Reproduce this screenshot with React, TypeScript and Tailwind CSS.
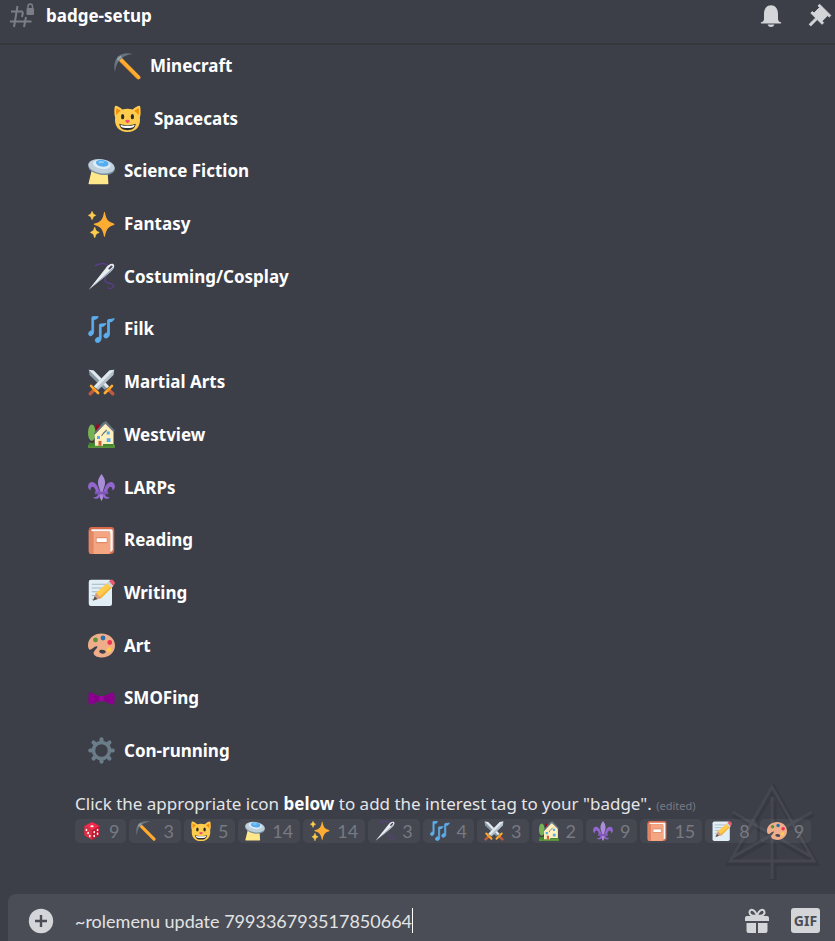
import { useState } from "react";
import type { ReactNode } from "react";

type EmojiName =
  | "die" | "pick" | "cat" | "saucer" | "sparkles" | "needle" | "notes" | "swords"
  | "house" | "fleur" | "book" | "memo" | "palette" | "bowtie" | "gear";

const art: Record<EmojiName, ReactNode> = {
  die: (
    <>
      <path fill="#f4294b" d="M18 2 L32 9 L18 17 L4 9Z" />
      <path fill="#dd2e44" d="M4 9 L18 17 V34 L6 27 Q4 26 4 24Z" />
      <path fill="#be1931" d="M32 9 L18 17 V34 L30 27 Q32 26 32 24Z" />
      <g fill="#fff">
        <ellipse cx="18" cy="9.500" rx="3" ry="1.800" />
        <ellipse cx="8" cy="16" rx="1.500" ry="2.200" />
        <ellipse cx="14" cy="27" rx="1.500" ry="2.200" />
        <ellipse cx="11" cy="21.500" rx="1.500" ry="2.200" />
        <ellipse cx="28" cy="16" rx="1.500" ry="2.200" />
        <ellipse cx="22" cy="20" rx="1.500" ry="2.200" />
        <ellipse cx="28" cy="23" rx="1.500" ry="2.200" />
        <ellipse cx="22" cy="27" rx="1.500" ry="2.200" />
      </g>
    </>
  ),
  pick: (
    <>
      <path d="M7 7 L32.500 32.500" stroke="#ffac33" strokeWidth="5.500" strokeLinecap="round" />
      <path d="M9 12 L31 34" stroke="#f4900c" strokeWidth="1.200" />
      <path fill="#66757f" d="M25.500 1.300 C16 -.8 9 1 5.200 5 C1 9.200 -.8 16 1.300 25.500 C2.500 17 4.500 12.500 8.500 8.500 C12.500 4.500 17 2.500 25.500 1.300Z" />
      <path d="M4.500 9.500 L9.500 4.500" stroke="#99aab5" strokeWidth="2.500" />
    </>
  ),
  cat: (
    <>
      <path fill="#ffcc4d" d="M2 1 C.8 1 .5 5 .5 10 C.5 13 1 15 1.500 16 C0 29 7 36 18 36 S36 29 34.500 16 C35 15 35.500 13 35.500 10 C35.500 5 35.200 1 34 1 C31.500 1 27.500 3.500 25 6 C20.500 4.500 15.500 4.500 11 6 C8.500 3.500 4.500 1 2 1Z" />
      <path fill="#f4900c" d="M3 4.500 C5 4.500 7.500 6.500 9 8 C6 9.500 4.500 11.500 3.200 13.500 C2.700 10 2.500 6.500 3 4.500Z M33 4.500 C31 4.500 28.500 6.500 27 8 C30 9.500 31.500 11.500 32.800 13.500 C33.300 10 33.500 6.500 33 4.500Z" />
      <ellipse cx="11.500" cy="15.500" rx="2.200" ry="3.600" fill="#292f33" />
      <ellipse cx="24.500" cy="15.500" rx="2.200" ry="3.600" fill="#292f33" />
      <path fill="#f0506e" d="M14.800 20.500 Q18 18.800 21.200 20.500 Q21.300 22.700 18 24.200 Q14.700 22.700 14.800 20.500Z" />
      <path fill="#292f33" d="M7 25 C11 27.500 25 27.500 29 25 C28 31.500 24 33.500 18 33.500 S8 31.500 7 25Z" />
      <path fill="#fff" d="M8.500 26.500 C13 28 23 28 27.500 26.500 C27 28.800 26 29.500 24.500 30 C20 31 16 31 11.500 30 C10 29.500 9 28.800 8.500 26.500Z" />
    </>
  ),
  saucer: (
    <>
      <path fill="#ffe88a" d="M5 16 L.8 33.500 Q0 35 2 35 H26 Q27.500 35 27.200 33.500 L26 17Z" />
      <ellipse cx="18" cy="13" rx="17.900" ry="9.500" fill="#7d909d" transform="rotate(9 18 13)" />
      <ellipse cx="18" cy="11" rx="17.800" ry="9.300" fill="#bdd0dc" transform="rotate(9 18 11)" />
      <ellipse cx="18.500" cy="8.500" rx="12" ry="6" fill="#dcebf5" transform="rotate(9 18 8)" />
      <ellipse cx="19" cy="7" rx="8.500" ry="4.500" fill="#55acee" transform="rotate(9 19 7)" />
      <ellipse cx="17.500" cy="5.500" rx="4" ry="1.400" fill="#8fccf8" />
    </>
  ),
  sparkles: (
    <>
      <path fill="#ffac33" d="M34.300 16.500 C27 14.500 24.500 12 22.600 2 Q22 0 21.300 2 C19.500 12 17 14.500 8.800 16.700 Q6.500 17.600 8.800 18.500 C17 20.700 19.500 24 21.300 33.500 Q22 35.500 22.600 33.500 C24.500 24 27 20.700 34.300 18.500 Q36.500 17.500 34.300 16.500Z" />
      <path fill="#ffcc4d" stroke="#ffcc4d" strokeWidth=".8" d="M14.300 28 C10.800 27 10.300 26 9.400 22.400 Q9 21 8.500 22.400 C7.600 26 7 27 3.800 28 Q3 28.500 3.800 29 C7 30 7.600 31.500 8.500 35 Q9 36.200 9.400 35 C10.300 31.500 10.800 30 14.300 29 Q15 28.500 14.300 28Z M9.800 5.200 C7.200 4.500 6.600 3.800 5.900 1 Q5.500 0 5 1 C4.200 3.800 3.700 4.500 1 5.200 Q0 5.700 1 6.200 C3.700 7 4.200 8 5 11 Q5.500 12 5.900 11 C6.600 8 7.200 7 9.800 6.200 Q10.800 5.700 9.800 5.200Z" />
    </>
  ),
  needle: (
    <>
      <path d="M9 4 C13 .8 20 0 25 2 C34 8 21 16 22.500 23 C24 29 31 25 34 30 C35 33 31 35 26 33" fill="none" stroke="#5f3d96" strokeWidth="1.600" />
      <path fill="#e8eef2" d="M1 35.500 L23.500 7 C26.500 2.500 31 .2 34 1.500 C36.500 4 34 8.500 30 12Z" />
      <path fill="#9aa9b5" d="M1 35.500 L30 12 C32 10 34 8 34.800 5 L27 12Z" />
      <path d="M28.500 7.500 L31.500 4.500" stroke="#454058" strokeWidth="2.500" strokeLinecap="round" />
    </>
  ),
  notes: (
    <g fill="#5dadec" stroke="#5dadec" strokeWidth="1.200" strokeLinejoin="round">
      <path d="M13.500 .8 C13 4.500 9.500 3.500 7.500 5.500 V21 C7.500 25 4.500 27 2.500 26.300 C.2 25.500 .3 21.500 2.800 20.200 C3.700 19.700 4.500 19.500 5.200 19.700 V2 Q5 1 6.200 1Z" />
      <path d="M24 10 C23 13.500 19.500 12 17.500 15 V29.500 C17.500 33.800 14.500 36 11.700 35.200 C9 34.300 9 30.500 12 29 C13.500 28.300 14.500 28.400 15.200 28.700 V12 Q15 11 16.200 11Z" />
      <path d="M35 3.500 C34 7.500 30.500 6 28.500 8.500 V24 C28.500 28 25.500 30 23 29.300 C20.300 28.500 20.500 24.500 23.500 23 C24.500 22.500 25.500 22.500 26.200 22.700 V6 Q26 5 27.200 5Z" />
      <path d="M6 1.500 H11 V3.500 H6Z M16 11 H21 V13.500 H16Z M27 5 H32 V7.500 H27Z" />
    </g>
  ),
  swords: (
    <>
      <path fill="#8899a6" d="M1 1 L7.500 2 L28 23 L22.500 28 L2 8Z" />
      <path fill="#e1e8ed" d="M1 1 L7.500 2 L28 23 L25.200 25.500Z" />
      <path fill="#b3c2cd" d="M35 1 L34 8 L13.500 28 L8 23 L28.500 2Z" />
      <path fill="#e1e8ed" d="M35 1 L28.500 2 L8 23 L10.800 25.500Z" />
      <path d="M7 29 L3 33 M29 29 L33 33" stroke="#be5a42" strokeWidth="4.500" strokeLinecap="round" />
      <path d="M4 22.500 L13.500 32 M32 22.500 L22.500 32" stroke="#ffac33" strokeWidth="3.500" strokeLinecap="round" />
      <path d="M9 27 L7 29 M27 27 L29 29" stroke="#f4900c" strokeWidth="4" />
    </>
  ),
  house: (
    <>
      <path fill="#5c913b" d="M0 32 H36 V35 Q36 36 35 36 H1 Q0 36 0 35Z" />
      <path fill="#662113" d="M4 20 H6 V33 H4Z" />
      <ellipse cx="5" cy="15.500" rx="5" ry="11" fill="#77b255" />
      <path fill="#a0041e" d="M11 5 H15 V14 H11Z" />
      <path fill="#fff0bd" d="M9 18 L20 6 L24 2.500 L34 13 V33 H9Z" />
      <path fill="#66757f" d="M20 2 L24 0 L36 13 L34 14.500 L23 3.500 L9 18 L7.500 17Z" />
      <path d="M20 17 L25 12 M20 17 L18 20" stroke="#66757f" strokeWidth="1.500" />
      <path fill="#55acee" d="M12 20 H16 V24 H12Z M25 14 H29 V18 H25Z M25 23 H30 V28 H25Z" />
      <path fill="#d1603f" d="M14 26.500 H18 V33 H14Z" />
      <path fill="#3e8a2d" d="M20 30.500 H34 V33.500 H20Z M1 29 H9 V33.500 H1Z" />
    </>
  ),
  fleur: (
    <>
      <path fill="#9266cc" d="M15 23 C13 14 8 9 3.500 11 C-1 13.500 -1 20 3.500 22 C3 17.500 6 15.500 8.500 18.500 C10 20.500 10.500 22 10 25 H26 C25.500 22 26 20.500 27.500 18.500 C30 15.500 33 17.500 32.500 22 C37 20 37 13.500 32.500 11 C28 9 23 14 21 23Z" />
      <path fill="#9266cc" d="M14 26 C13 30 9.500 32 6.500 30.500 C9 34.500 14 33.500 16 30 L18 36 L20 30 C22 33.500 27 34.500 29.500 30.500 C26.500 32 23 30 22 26Z" />
      <path fill="#aa8dd8" d="M18 0 C13 6 12 12 15 19 L16.500 25 H19.500 L21 19 C24 12 23 6 18 0Z M16.500 27 H19.500 L20 32 L18 36 L16 32Z" />
      <path fill="#7c56b5" d="M9 23.500 H27 V27 H9Z" />
    </>
  ),
  book: (
    <>
      <path fill="#d86b4a" d="M5 0 H31 Q35 0 35 4 V31 Q35 36 30 36 H4 Q1 36 1 32 V4 Q1 0 5 0Z" />
      <path fill="#f5f8fa" d="M5 3 H31 Q33 3 33 5 V30 Q33 33 30 33 H29 V6 H5 Q3 5 5 3Z" />
      <path fill="#f4a582" d="M7 6 H27 Q30 6 30 9 V33 Q30 36 27 36 H7Z" />
      <path fill="#e08765" d="M1 4 Q2 6 7 6 V36 H4 Q1 36 1 32Z" />
      <rect x="10.500" y="13.500" width="15.500" height="8" rx="1" fill="#e08765" />
      <rect x="11.500" y="15" width="13.500" height="5" fill="#fff" />
    </>
  ),
  memo: (
    <>
      <rect x="1" y="1" width="31" height="35" rx="3" fill="#e1eef6" />
      <path d="M5 7 H24 M5 12 H20 M5 17 H16 M5 22 H13 M5 27 H9" stroke="#a3b7c4" strokeWidth="1.500" />
      <path fill="#ffcc4d" d="M27 4 L33 10 L17 26 L10 19Z" />
      <path fill="#f4b13c" d="M32 9 L33 10 L17 26 L15 24Z" />
      <path fill="#ccd6dd" d="M25.500 5.500 L28 3 L34 9 L31.500 11.500Z" />
      <path fill="#ea596e" d="M28 3 L30.500 1 Q32 0 33.500 1.500 L35.300 3.500 Q36.500 5 35.500 6.500 L33.500 9Z" />
      <path fill="#d99e82" d="M10.500 18 L17.500 25.500 L7 28.500Z" />
      <path fill="#55504d" d="M9 23 L12.500 26.500 L6.500 29Z" />
    </>
  ),
  palette: (
    <>
      <path fill="#efae89" fillRule="evenodd" d="M18 2 C8 2 0 8.500 0 17.500 C0 21 1 23 2.500 23.500 C6 23.500 8.500 18.500 12 19 C14 20 9 24 7.500 27 C6.500 31 12 34 18.500 34 C28.500 34 36 27 36 18 S28 2 18 2Z M18.500 23.500 C22 23.500 24 25 23.500 27 C23 29 19 29.500 16.500 28 C14 26 14.500 23.500 18.500 23.500Z" />
      <circle cx="10" cy="10.500" r="3.200" fill="#5c913b" />
      <circle cx="20" cy="8" r="3.200" fill="#2a6fae" />
      <circle cx="29" cy="14" r="3.200" fill="#ee3350" />
      <circle cx="28" cy="23.500" r="3.200" fill="#ffcc4d" />
    </>
  ),
  bowtie: (
    <>
      <path fill="#8b008f" d="M1 10 C6 9 11 14.500 16 14.500 H20 C25 14.500 30 9 35 10 Q36 18 35 26 C30 27 25 21.500 20 21.500 H16 C11 21.500 6 27 1 26 Q0 18 1 10Z" />
      <path d="M7 15 L14 17 M7 21 L14 19 M29 15 L22 17 M29 21 L22 19" stroke="#76007a" strokeWidth="1" />
      <rect x="15" y="14.500" width="6" height="7" rx="1.500" fill="#97089b" />
    </>
  ),
  gear: (
    <g fill="none" stroke="#6b7d89">
      <circle cx="18" cy="18" r="10.700" strokeWidth="4.600" />
      <path
        strokeWidth="5.500"
        strokeLinecap="round"
        d="M18 5.500 V3 M18 30.500 V33 M5.500 18 H3 M30.500 18 H33 M9.200 9.200 L7.400 7.400 M26.800 9.200 L28.600 7.400 M9.200 26.800 L7.400 28.600 M26.800 26.800 L28.600 28.600"
      />
    </g>
  ),
};

function Emoji({ name, className }: { name: EmojiName; className: string }) {
  return (
    <svg viewBox="0 0 36 36" className={`shrink-0 ${className}`} aria-hidden="true">
      {art[name]}
    </svg>
  );
}

const interests: { icon: EmojiName; label: string; row: string }[] = [
  { icon: "pick", label: "Minecraft", row: "pl-[114px] gap-[9px]" },
  { icon: "cat", label: "Spacecats", row: "pl-[114px] gap-[13px]" },
  { icon: "saucer", label: "Science Fiction", row: "pl-[88px] gap-[9px]" },
  { icon: "sparkles", label: "Fantasy", row: "pl-[88px] gap-[9px]" },
  { icon: "needle", label: "Costuming/Cosplay", row: "pl-[88px] gap-[9px]" },
  { icon: "notes", label: "Filk", row: "pl-[88px] gap-[9px]" },
  { icon: "swords", label: "Martial Arts", row: "pl-[88px] gap-[9px]" },
  { icon: "house", label: "Westview", row: "pl-[88px] gap-[9px]" },
  { icon: "fleur", label: "LARPs", row: "pl-[88px] gap-[9px]" },
  { icon: "book", label: "Reading", row: "pl-[88px] gap-[9px]" },
  { icon: "memo", label: "Writing", row: "pl-[88px] gap-[9px]" },
  { icon: "palette", label: "Art", row: "pl-[88px] gap-[9px]" },
  { icon: "bowtie", label: "SMOFing", row: "pl-[88px] gap-[9px]" },
  { icon: "gear", label: "Con-running", row: "pl-[88px] gap-[9px]" },
];

const reactions: [EmojiName, number][] = [
  ["die", 9], ["pick", 3], ["cat", 5], ["saucer", 14], ["sparkles", 14], ["needle", 3], ["notes", 4],
  ["swords", 3], ["house", 2], ["fleur", 9], ["book", 15], ["memo", 8], ["palette", 9],
];

function Header() {
  return (
    <header className="flex h-[45px] items-center border-b-2 border-[#36373c] pr-[3px] pb-3 pl-2">
      <svg viewBox="0 0 26 26" className="size-[26px]" aria-hidden="true">
        <g fill="none" stroke="#7b7e87" strokeWidth="2">
          <path d="M9.500 3 L6 24 M18 14 L16 24 M3 8.500 H15 M2 18.500 H23.500" />
          <path d="M14 14 L15 9" />
        </g>
        <rect x="18.500" y="5" width="7.500" height="7" rx="1" fill="#7b7e87" />
        <path d="M20 6 V3.500 Q20 1 22.200 1 T24.500 3.500 V6" fill="none" stroke="#7b7e87" strokeWidth="1.500" />
      </svg>
      <h1 className="ml-3 text-[17px] leading-6 font-bold text-white">badge-setup</h1>
      <div className="ml-auto flex items-center gap-6">
        <button type="button" aria-label="Notification settings">
          <svg viewBox="0 0 24 24" className="size-6" fill="#d3d5d8" aria-hidden="true">
            <path d="M5 10 C5 4.500 8 1.200 12 1.200 S19 4.500 19 10 V15 C19 17 20.500 18 22 18.300 Q22.800 19.500 21.500 19.500 H2.500 Q1.200 19.500 2 18.300 C3.500 18 5 17 5 15Z M8.500 20.500 H15.500 Q14.500 23 12 23 T8.500 20.500Z" />
          </svg>
        </button>
        <button type="button" aria-label="Pinned messages">
          <svg viewBox="1 1 22 22" className="size-[25px]" fill="#d3d5d8" aria-hidden="true">
            <path d="M22 12 L12.101 2.100 L10.687 3.515 L12.101 4.929 L7.151 9.878 V9.879 L5.737 8.465 L4.323 9.879 L8.565 14.121 L2.908 19.778 L4.322 21.192 L9.979 15.536 L14.222 19.778 L15.636 18.364 L14.222 16.950 L19.171 12 H19.172 L20.586 13.414 L22 12Z" stroke="#d3d5d8" strokeWidth=".8" />
          </svg>
        </button>
      </div>
    </header>
  );
}

function Watermark() {
  return (
    <svg
      viewBox="0 0 100 104"
      className="pointer-events-none absolute right-[13px] -bottom-[42px] h-[104px] w-[100px]"
      fill="none"
      aria-hidden="true"
    >
      <path
        d="M51.500 8 L8 82 H93Z M51.500 20 V99 M12 33 L90 78 M91 33 L12 78"
        stroke="#30323a"
        strokeOpacity=".4"
        strokeWidth="6"
      />
      <path
        d="M50 6 L8 80 H92Z M50 16 V98 M11 31 L90 76 M90 31 L11 76"
        stroke="#484a52"
        strokeOpacity=".8"
        strokeWidth="3"
      />
    </svg>
  );
}

function Composer() {
  const [text, setText] = useState("~rolemenu update 799336793517850664");
  return (
    <form className="ml-2 flex h-[47px] items-center rounded-tl-lg bg-[#4a4d56] pt-[6px] pr-[15px] pl-[20px]">
      <button type="button" aria-label="Add attachment" className="shrink-0">
        <svg viewBox="0 0 26 26" className="size-[26px]" aria-hidden="true">
          <circle cx="13" cy="13" r="12.200" fill="#d3d5d8" />
          <path d="M13 7 V19 M7 13 H19" stroke="#4a4d56" strokeWidth="2.400" />
        </svg>
      </button>
      <div className="ml-[21px] flex min-w-0 flex-1 items-center">
        <input
          aria-label="Message #badge-setup"
          value={text}
          onChange={(e) => setText(e.target.value)}
          className="[field-sizing:content] bg-transparent font-['Lato','Noto_Sans',sans-serif] text-[18px] leading-6 text-[#e2e3e4] outline-none"
        />
        <span className="h-[25px] w-px bg-white" />
      </div>
      <div className="flex items-center gap-[21px]">
        <button type="button" aria-label="Send a gift">
          <svg viewBox="0 0 26 26" className="size-[26px]" aria-hidden="true">
            <g fill="#d3d5d8">
              <path d="M3 8 H23 Q25 8 25 10 V13 H1 V10 Q1 8 3 8Z" />
              <path d="M2.500 15 H12 V25 H4.500 Q2.500 25 2.500 23Z M14 15 H23.500 V23 Q23.500 25 21.500 25 H14Z" />
            </g>
            <path d="M13 8 C11 8 5.500 7.500 5.500 4.500 C5.500 .5 11 .5 13 8 C15 .5 20.500 .5 20.500 4.500 C20.500 7.500 15 8 13 8Z" fill="none" stroke="#d3d5d8" strokeWidth="2" />
          </svg>
        </button>
        <button
          type="button"
          aria-label="Open GIF picker"
          className="flex h-[25px] w-[29px] items-center justify-center rounded-[3px] bg-[#d3d5d8] text-[14px] font-bold text-[#4a4d56]"
        >
          GIF
        </button>
      </div>
    </form>
  );
}

export default function App() {
  return (
    <div className="flex min-h-screen flex-col overflow-hidden bg-[#3c3e48] font-['Noto_Sans','Open_Sans',sans-serif]">
      <Header />
      <main className="flex flex-1 flex-col">
        <ul className="flex flex-1 flex-col justify-between pt-px">
          {interests.map(({ icon, label, row }) => (
            <li key={label} className={`flex h-10 items-center ${row}`}>
              <Emoji name={icon} className="size-[27px]" />
              <strong className="text-[17px] leading-6 text-white">{label}</strong>
            </li>
          ))}
        </ul>
        <section className="relative mt-5 mb-[51px] pl-[75px]">
          <Watermark />
          <p className="text-[17px] leading-[26px] whitespace-nowrap text-[#e4e5e7]">
            Click the appropriate icon <strong className="text-white">below</strong> to add the interest tag to your
            "badge". <small className="text-[11px] text-[#777a82]">(edited)</small>
          </p>
          <div className="relative flex gap-[3px] font-['Lato','Noto_Sans',sans-serif]">
            {reactions.map(([icon, count]) => (
              <button
                key={icon}
                type="button"
                className="flex h-6 items-center gap-[7px] rounded-[5px] bg-white/5 px-[7px] text-[18px] leading-6 text-[#777a82]"
              >
                <Emoji name={icon} className="size-5" />
                {count}
              </button>
            ))}
          </div>
        </section>
      </main>
      <Composer />
    </div>
  );
}
